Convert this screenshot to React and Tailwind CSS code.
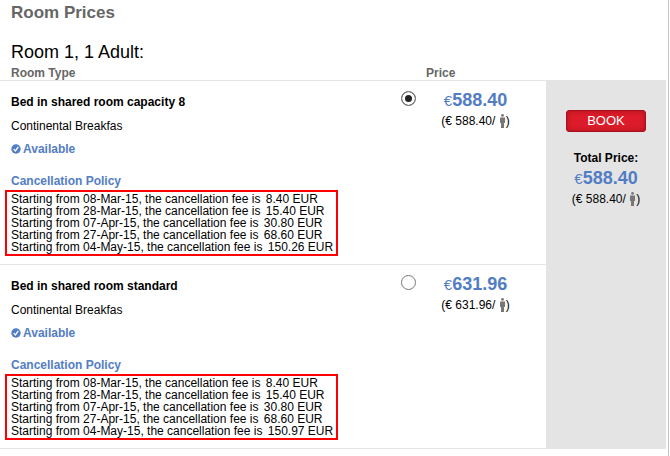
const ROOMS = [
  {
    id: 'capacity-8',
    name: 'Bed in shared room capacity 8',
    board: 'Continental Breakfas',
    price: '588.40',
    fees: [
      ['08-Mar-15', '8.40'],
      ['28-Mar-15', '15.40'],
      ['07-Apr-15', '30.80'],
      ['27-Apr-15', '68.60'],
      ['04-May-15', '150.26'],
    ],
  },
  {
    id: 'standard',
    name: 'Bed in shared room standard',
    board: 'Continental Breakfas',
    price: '631.96',
    fees: [
      ['08-Mar-15', '8.40'],
      ['28-Mar-15', '15.40'],
      ['07-Apr-15', '30.80'],
      ['27-Apr-15', '68.60'],
      ['04-May-15', '150.97'],
    ],
  },
]

function PersonIcon() {
  return (
    <svg width="7" height="14" viewBox="0 0 7 14" fill="#777" className="inline-block align-text-bottom" aria-hidden="true">
      <circle cx="3.5" cy="1.4" r="1.4" />
      <path d="M1 3.4h5V9H5v5H2V9H1z" />
    </svg>
  )
}

function CheckIcon() {
  return (
    <svg width="10" height="10" viewBox="0 0 10 10" aria-hidden="true">
      <circle cx="5" cy="5" r="4.7" fill="#527dc4" />
      <path d="M2.7 5.1l1.7 1.8 2.9-4.1" fill="none" stroke="#fff" strokeWidth="1.3" />
    </svg>
  )
}

function Price({ amount }) {
  return (
    <>
      <div className="text-lg leading-5 font-bold text-[#527dc4]">
        <span className="text-[15px] leading-none font-normal">€</span>{amount}
      </div>
      <div className="mt-[3px] leading-4 whitespace-nowrap">
        (€ {amount}/ <PersonIcon />)
      </div>
    </>
  )
}

function RoomRow({ room, defaultChecked, children }) {
  return (
    <tr className="align-top">
      <td className="border-b border-[#e4e4e4] pt-[11px] pb-2 pl-[5px]">
        <label htmlFor={room.id} className="block pl-1.5 leading-5 font-bold">{room.name}</label>
        <p className="mt-1 pl-1.5 leading-5">{room.board}</p>
        <p className="mt-1 flex items-center gap-0.5 pl-1.5 leading-[18px] font-bold text-[#527dc4]">
          <CheckIcon />
          Available
        </p>
        <a href="#policy" className="mt-[15px] block pl-1.5 leading-[17px] font-bold text-[#527dc4]">Cancellation Policy</a>
        <ul className="w-[333px] border-2 border-[#f00] py-px pl-1 leading-3 whitespace-nowrap">
          {room.fees.map(([date, fee]) => (
            <li key={date}>
              Starting from {date}, the cancellation fee is <span className="ml-0.5">{fee} EUR</span>
            </li>
          ))}
        </ul>
      </td>
      <td className="border-b border-[#e4e4e4] pt-2.5">
        <input
          id={room.id}
          type="radio"
          name="room"
          defaultChecked={defaultChecked}
          className="m-0 block size-[15px] appearance-none rounded-full border border-[#777] bg-white checked:bg-[#222] checked:shadow-[inset_0_0_0_3px_#fff]"
        />
      </td>
      <td className="border-b border-[#e4e4e4] pt-[9px] pr-5 text-center">
        <Price amount={room.price} />
      </td>
      {children}
    </tr>
  )
}

export default function App() {
  return (
    <main className="min-h-screen bg-white pr-px font-['Liberation_Sans',Arial,sans-serif] text-xs text-black">
      <div className="min-h-screen border-r border-[#c4c4c4] pr-0.5">
        <h1 className="pt-[3px] pl-[11px] text-[17px] leading-5 font-bold text-[#666]">Room Prices</h1>
        <h2 className="mt-[17px] mb-0.5 pl-[11px] text-lg leading-6">Room 1, 1 Adult:</h2>
        <table className="w-full table-fixed border-separate border-spacing-0">
          <colgroup>
            <col />
            <col className="w-6" />
            <col className="w-[121px]" />
            <col className="w-[120px]" />
          </colgroup>
          <thead>
            <tr className="text-left leading-[14px] text-[#666]">
              <th className="border-b border-[#e4e4e4] pl-[11px]">Room Type</th>
              <th className="border-b border-[#e4e4e4]"></th>
              <th className="border-b border-[#e4e4e4] pl-px">Price</th>
              <th className="border-b border-[#e4e4e4]"></th>
            </tr>
          </thead>
          <tbody>
            <RoomRow room={ROOMS[0]} defaultChecked>
              <td rowSpan={2} className="bg-[#e4e4e4] pt-[29px] text-center">
                <button
                  type="button"
                  className="mx-auto mb-4 block h-[22px] w-20 rounded-[3px] border border-[#a80f1c] bg-[#dc1c2a] text-[13px] leading-5 text-white shadow-[inset_0_0_5px_#a80f1c]"
                >
                  BOOK
                </button>
                <div className="leading-5 font-bold">Total Price:</div>
                <Price amount="588.40" />
              </td>
            </RoomRow>
            <RoomRow room={ROOMS[1]} />
          </tbody>
        </table>
      </div>
    </main>
  )
}
